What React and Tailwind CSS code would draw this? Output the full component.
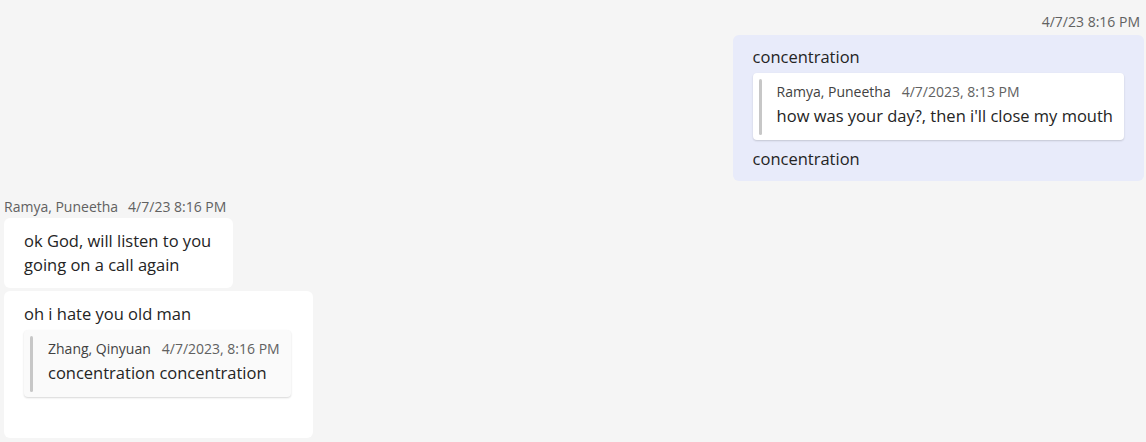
const font = { fontFamily: '"Segoe UI", "Open Sans", "Noto Sans", sans-serif' };

const Quote = ({ name, time, text, tint }) => (
    <div className={`flex gap-[15px] rounded-[4px] pl-[6px] pr-[11px] pt-[6px] pb-[5px] shadow-[0_1px_2px_rgba(0,0,0,0.16)] ${tint ? 'bg-[#fafafa]' : 'bg-white'}`}>
        <div className="w-[3px] rounded-full bg-[#c7c7c7]" />
        <div className="pt-[4px] pb-[7px]">
            <div className="flex gap-[11px] text-[14px] leading-[18px] text-[#424242]">
                <span>{name}</span>
                <span className="text-[#616161]">{time}</span>
            </div>
            <div className="mt-[3px] text-[16.5px] leading-[24px] text-[#242424]">{text}</div>
        </div>
    </div>
);

export default function App() {
    return (
        <div className="min-h-[442px] w-[1146px] bg-[#f5f5f5] text-[#242424]" style={font}>
            {/* my message */}
            <div className="flex flex-col items-end pr-[2px] pt-[12px]">
                <div className="pr-[4px] text-[14px] leading-[20px] text-[#616161]">4/7/23 8:16 PM</div>
                <div className="mt-[3px] flex flex-col gap-[4px] rounded-[6px] bg-[#e8ebfa] px-5 py-[10px] text-[16.5px] leading-[24px]">
                    <div>concentration</div>
                    <Quote name="Ramya, Puneetha" time="4/7/2023, 8:13 PM" text="how was your day?, then i'll close my mouth" />
                    <div className="mt-[3px]">concentration</div>
                </div>
            </div>

            {/* their messages */}
            <div className="mt-[16px] flex flex-col items-start pl-[4px]">
                <div className="flex gap-[10px] text-[14px] leading-[20px] text-[#616161]">
                    <span>Ramya, Puneetha</span>
                    <span>4/7/23 8:16 PM</span>
                </div>
                <div className="mt-[1px] flex flex-col gap-[3px]">
                    <div className="w-fit rounded-[6px] bg-white pl-5 pr-[22px] py-[11px] text-[16.5px] leading-[24px]">
                        <div>ok God, will listen to you</div>
                        <div>going on a call again</div>
                    </div>
                    <div className="flex w-fit flex-col gap-[4px] rounded-[6px] bg-white pl-5 pr-[22px] pt-[11px] pb-[41px] text-[16.5px] leading-[24px]">
                        <div>oh i hate you old man</div>
                        <Quote tint name="Zhang, Qinyuan" time="4/7/2023, 8:16 PM" text="concentration concentration" />
                    </div>
                </div>
            </div>
        </div>
    );
}
